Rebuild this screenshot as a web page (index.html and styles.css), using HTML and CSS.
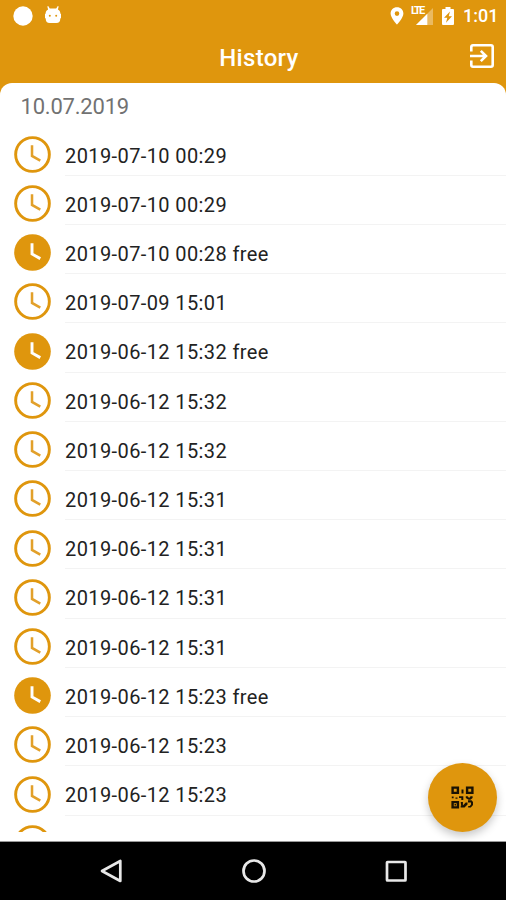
FILE: index.html
```html
<!DOCTYPE html>
<html lang="en">
<head>
<meta charset="utf-8">
<title>History</title>
<link rel="stylesheet" href="styles.css">
</head>
<body>
<svg class="defs" width="0" height="0">
  <symbol id="open" viewBox="0 0 38 38"><circle cx="19" cy="19" r="17.300" fill="none" stroke="#df960d" stroke-width="3"/><path d="M18.500 9.500v11l8.500 4.800" fill="none" stroke="#e2a02a" stroke-width="2.600"/></symbol>
  <symbol id="full" viewBox="0 0 38 38"><circle cx="19" cy="19" r="18.800" fill="#df960d"/><path d="M18.500 9.500v11l8.500 4.800" fill="none" stroke="#fff" stroke-width="3"/></symbol>
</svg>
<div class="screen">
  <header class="top">
    <div class="status">
      <svg class="dot" viewBox="0 0 20 20"><circle cx="10" cy="10" r="9.700" fill="#fff"/></svg>
      <svg class="bot" viewBox="0 0 16 18"><path d="M3.200 0l1.600 2.500h6.400L12.800 0l.900.500-.800 3c1.600 1 2.400 2 2.400 3.500v.5l.7.500v4l-.7.500q0 4.500-4 4.500H4.700q-4 0-4-4.500L0 12V8l.7-.5V7c0-1.500.8-2.500 2.400-3.500L2.300.5z" fill="#fff"/><circle cx="4.800" cy="9.700" r="1" fill="#df960d"/><circle cx="11.200" cy="9.700" r="1" fill="#df960d"/></svg>
      <span class="spacer"></span>
      <svg class="pin" viewBox="0 0 14 18"><path fill="#fff" fill-rule="evenodd" d="M7 .3C3.300.3.600 3 .600 6.600.600 11 7 17.700 7 17.700S13.400 11 13.400 6.600C13.400 3 10.700.3 7 .3zM7 4.300a2.300 2.300 0 1 1 0 4.600 2.300 2.300 0 0 1 0-4.600z"/></svg>
      <div class="signal"><span class="lte">LTE</span><svg viewBox="0 0 18 18"><path d="M18 0v18H0z" fill="#fff" opacity=".35"/><path d="M12 6v12H0z" fill="#fff"/></svg></div>
      <svg class="battery" viewBox="0 0 12 18"><path fill="#fff" fill-rule="evenodd" d="M3.500 0h5v2H11q1 0 1 1v14q0 1-1 1H1q-1 0-1-1V3q0-1 1-1h2.500zM8 4.500L2 10.800H5.300L4 15.800L10 9.300H6.700z"/></svg>
      <span class="time">1:01</span>
    </div>
    <div class="bar"><h1>History</h1>
      <svg class="exit" viewBox="0 0 24 24" fill="none" stroke="#fff" stroke-width="2.600"><path d="M1.300 7.500V3q0-1.700 1.700-1.700h18q1.700 0 1.700 1.700v18q0 1.700-1.700 1.700H3q-1.700 0-1.700-1.700v-4.500M0 12h15.500M10.800 6.800l5.200 5.200-5.200 5.200"/></svg>
    </div>
  </header>
  <main class="sheet">
    <h2>10.07.2019</h2>
    <ul class="list">
      <li><svg><use href="#open"/></svg><span>2019-07-10 00:29</span></li>
      <li><svg><use href="#open"/></svg><span>2019-07-10 00:29</span></li>
      <li><svg><use href="#full"/></svg><span>2019-07-10 00:28 free</span></li>
      <li><svg><use href="#open"/></svg><span>2019-07-09 15:01</span></li>
      <li><svg><use href="#full"/></svg><span>2019-06-12 15:32 free</span></li>
      <li><svg><use href="#open"/></svg><span>2019-06-12 15:32</span></li>
      <li><svg><use href="#open"/></svg><span>2019-06-12 15:32</span></li>
      <li><svg><use href="#open"/></svg><span>2019-06-12 15:31</span></li>
      <li><svg><use href="#open"/></svg><span>2019-06-12 15:31</span></li>
      <li><svg><use href="#open"/></svg><span>2019-06-12 15:31</span></li>
      <li><svg><use href="#open"/></svg><span>2019-06-12 15:31</span></li>
      <li><svg><use href="#full"/></svg><span>2019-06-12 15:23 free</span></li>
      <li><svg><use href="#open"/></svg><span>2019-06-12 15:23</span></li>
      <li><svg><use href="#open"/></svg><span>2019-06-12 15:23</span></li>
      <li><svg><use href="#open"/></svg><span></span></li>
    </ul>
    <button class="fab" aria-label="Scan code"><svg viewBox="0 0 23 23"><g fill="none" stroke="#1a1203" stroke-width="2.400"><path d="M1.600 1.600h5.300v5.300H1.600zM16.100 1.600h5.300v5.300h-5.300zM1.600 16.100h5.300v5.300H1.600z"/></g><path fill="#1a1203" d="M3.500 18h1.500v1.500H3.500zM10.500 3.500h2v4h-2zM.8 10.500h1.800v1.800H.8zM4.500 11.500h2v1.300h-2zM8 10.300h4.300v3.700h-2v-2H8zM14.800 10.300h1.800l1.500 1.700 1.500-1.700h2v1.800l-2.200 1.600h-1.800l-2.800-1.600zM9.700 16h2.200v3.500l2.800-3h1.800v2l-3 3H9.700v-1.700h.5zM17 14.300h3.500l1.500 1.700v3l-2.200 2.600h-2.600V20h1.600l1.200-1.600v-1.800H17z"/></svg></button>
  </main>
  <nav class="nav">
    <svg viewBox="0 0 24 24"><path d="M20.300 2v20L2 12z"/></svg>
    <svg viewBox="0 0 24 24"><circle cx="12" cy="12" r="10.500"/></svg>
    <svg viewBox="0 0 24 24"><rect x="3" y="3" width="18.500" height="18.500" rx=".5"/></svg>
  </nav>
</div>
</body>
</html>
```
FILE: styles.css
```css
* { box-sizing: border-box; }
body { margin: 0; font-family: Roboto, "Liberation Sans", sans-serif; }
.defs { position: absolute; }
.screen { width: 506px; height: 900px; display: flex; flex-direction: column; overflow: hidden; background: #df960d; }
.top { height: 83px; flex: none; color: #fff; }
.status { height: 32px; display: flex; align-items: center; padding: 0 11px 0 13px; }
.spacer { flex: 1; }
.dot { width: 20px; height: 20px; margin-right: 12px; }
.bot { width: 16px; height: 18px; margin-top: -3px; }
.pin { width: 14px; height: 18px; }
.signal { width: 22px; height: 18px; margin: 0 9px 0 7px; display: flex; justify-content: flex-end; align-items: flex-end; position: relative; }
.signal svg { width: 17px; height: 17px; }
.lte { position: absolute; left: 0; top: -2px; font-size: 11px; line-height: 11px; font-weight: 700; letter-spacing: -1.800px; }
.battery { width: 12px; height: 18px; margin-right: 9px; }
.time { font-size: 18px; line-height: 20px; margin-top: -1px; font-weight: 500; width: 32px; white-space: nowrap; }
.bar { height: 51px; display: grid; grid-template-columns: 1fr auto 1fr; align-items: center; padding: 0 12px 0 24px; }
.bar h1 { grid-column: 2; margin: 0; font-size: 24px; line-height: 28px; font-weight: 500; letter-spacing: .3px; }
.exit { width: 24px; height: 24px; justify-self: end; margin-top: -3px; }
.sheet { height: 759px; flex: none; background: #fff; border-radius: 12px 12px 0 0; border-bottom: 1px solid #999; position: relative; }
.sheet h2 { margin: 0; height: 43.500px; padding: 10px 0 0 20.500px; font-size: 22px; line-height: 28px; font-weight: 400; letter-spacing: -.2px; color: #727272; }
.list { margin: 0; padding: 0; height: 705px; overflow: hidden; list-style: none; }
.list li { height: 49.230px; display: flex; align-items: flex-start; padding: 9.300px 0 0 14px; }
.list svg { width: 37px; height: 37px; flex: none; }
.list span { flex: 1; align-self: stretch; margin-left: 14px; margin-top: -9.300px; padding-top: 15px; border-bottom: 1px solid #f3f3f3; font-size: 20px; line-height: 29px; letter-spacing: .4px; color: #222; }
.fab { position: absolute; right: 9px; bottom: 9px; width: 69px; height: 69px; padding: 0; border: 0; border-radius: 50%; background: #df960d; box-shadow: 0 4px 8px rgba(0,0,0,.22); display: flex; align-items: center; justify-content: center; }
.fab svg { width: 23px; height: 23px; }
.nav { height: 58px; flex: none; background: #000; display: flex; justify-content: center; align-items: center; gap: 118px; padding-left: 1.500px; }
.nav svg { width: 24px; height: 24px; fill: none; stroke: #e8e8e8; stroke-width: 2.700; stroke-linejoin: round; }
```
